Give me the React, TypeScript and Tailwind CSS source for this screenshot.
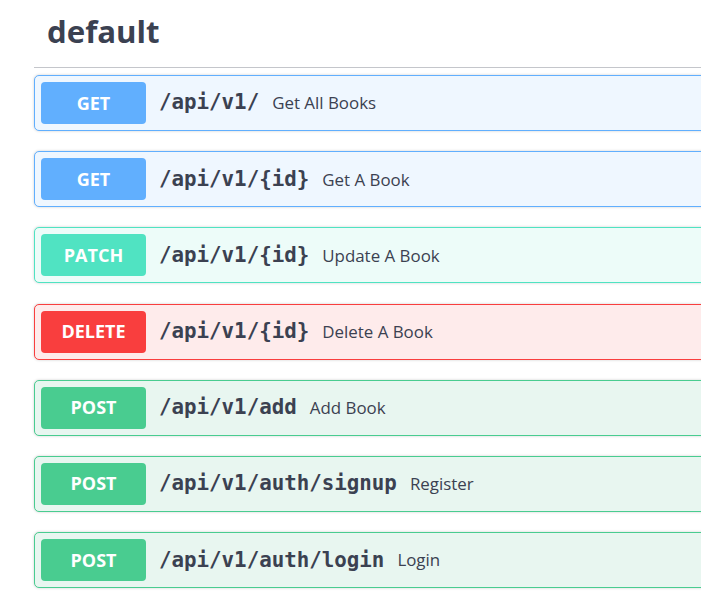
const ops = [
  { method: "GET", path: "/api/v1/", summary: "Get All Books" },
  { method: "GET", path: "/api/v1/{id}", summary: "Get A Book" },
  { method: "PATCH", path: "/api/v1/{id}", summary: "Update A Book" },
  { method: "DELETE", path: "/api/v1/{id}", summary: "Delete A Book" },
  { method: "POST", path: "/api/v1/add", summary: "Add Book" },
  { method: "POST", path: "/api/v1/auth/signup", summary: "Register" },
  { method: "POST", path: "/api/v1/auth/login", summary: "Login" },
]

const styles: Record<string, { block: string; badge: string }> = {
  GET: { block: "border-[#61affe] bg-[#eff7ff]", badge: "bg-[#61affe]" },
  PATCH: { block: "border-[#50e3c2] bg-[#edfcf9]", badge: "bg-[#50e3c2]" },
  DELETE: { block: "border-[#f93e3e] bg-[#feebeb]", badge: "bg-[#f93e3e]" },
  POST: { block: "border-[#49cc90] bg-[#e8f6f0]", badge: "bg-[#49cc90]" },
}

function OpBlock({ method, path, summary }: { method: string; path: string; summary: string }) {
  const s = styles[method]
  return (
    <div
      className={`mb-[20.2px] flex h-[56px] items-center rounded-[5px] border px-[6px] shadow-[0_0_3px_rgba(0,0,0,0.19)] ${s.block}`}
    >
      <span
        className={`flex h-[42px] w-[105px] shrink-0 items-center justify-center rounded-[4px] text-[18px] font-bold text-white ${s.badge}`}
      >
        {method}
      </span>
      <span className="pl-[13px] pr-[13px] font-['DejaVu_Sans_Mono',monospace] text-[20.8px] font-bold text-[#3b4151]">
        {path}
      </span>
      <span className="text-[16.9px] text-[#3b4151]">{summary}</span>
    </div>
  )
}

export default function App() {
  return (
    <div className="h-screen w-full overflow-hidden bg-white font-['Open_Sans','Noto_Sans',sans-serif]">
      <div className="ml-[34px] w-[760px]">
        <div className="flex h-[68px] items-center border-b border-[#c4c6cb] pb-[5px] pl-[13px]">
          <h3 className="text-[31.2px] font-bold text-[#3b4151]">default</h3>
        </div>
        <div className="pt-[7px]">
          {ops.map((op, i) => (
            <OpBlock key={i} {...op} />
          ))}
        </div>
      </div>
    </div>
  )
}
